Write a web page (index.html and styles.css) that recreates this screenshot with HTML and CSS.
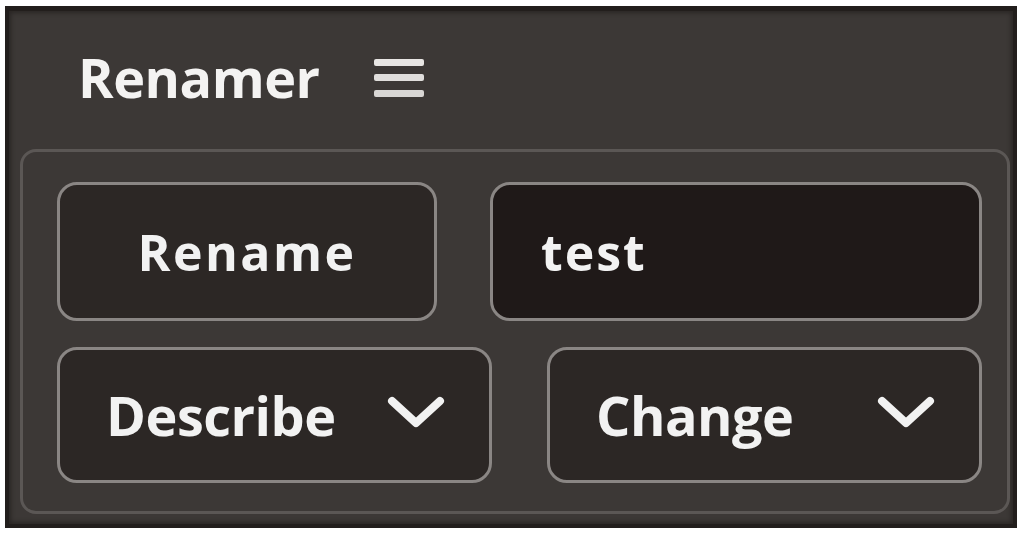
FILE: index.html
```html
<!DOCTYPE html>
<html lang="en">
<head>
    <meta charset="UTF-8">
    <title>Renamer</title>
    <link rel="stylesheet" href="styles.css">
</head>
<body>
    <div class="panel">
        <div class="header">
            <span class="title">Renamer</span>
            <svg class="menu-icon" width="50" height="42" viewBox="0 0 50 42">
                <rect x="0" y="2" width="50" height="7" rx="2" fill="#e8e6e4"/>
                <rect x="0" y="17" width="50" height="7" rx="2" fill="#e0dedc"/>
                <rect x="0" y="33" width="50" height="7" rx="2" fill="#d8d6d4"/>
            </svg>
        </div>

        <div class="group">
            <div class="row row-top">
                <button class="btn rename-btn">Rename</button>
                <div class="text-input">test</div>
            </div>
            <div class="row row-bottom">
                <div class="select">
                    <span>Describe</span>
                    <svg class="chevron" width="58" height="34" viewBox="0 0 58 34">
                        <polyline points="5,6 29,28 53,6" fill="none" stroke="#f2f2f2" stroke-width="8" stroke-linecap="round" stroke-linejoin="round"/>
                    </svg>
                </div>
                <div class="select">
                    <span>Change</span>
                    <svg class="chevron" width="58" height="34" viewBox="0 0 58 34">
                        <polyline points="5,6 29,28 53,6" fill="none" stroke="#f2f2f2" stroke-width="8" stroke-linecap="round" stroke-linejoin="round"/>
                    </svg>
                </div>
            </div>
        </div>
    </div>
</body>
</html>
```

FILE: styles.css
```css
body {
    margin: 0;
    background-color: #ffffff;
    font-family: 'Open Sans', 'Liberation Sans', sans-serif;
}
.panel {
    width: 1012px;
    height: 522px;
    margin: 6px 0 0 5px;
    box-sizing: border-box;
    background-color: #3c3836;
    border: 4px solid #221e1c;
    border-top-width: 5px;
    box-shadow: inset 0 0 4px 2px #2a2624;
    padding: 0 3px 0 11px;
}
.header {
    height: 138px;
    display: flex;
    align-items: center;
    padding-left: 58px;
    gap: 54px;
}
.title {
    color: #f4f3f2;
    font-size: 54px;
    font-weight: 700;
    letter-spacing: -0.5px;
    line-height: 1;
    margin-top: -6px;
}
.menu-icon {
    margin-top: -4px;
}
.group {
    width: 990px;
    height: 365px;
    box-sizing: border-box;
    border: 3px solid #5b5755;
    border-radius: 16px;
    padding: 30px 25px 0 34px;
    display: flex;
    flex-direction: column;
    gap: 26px;
}
.row {
    display: flex;
}
.row-top {
    height: 139px;
    gap: 53px;
}
.row-bottom {
    height: 136px;
    gap: 55px;
}
.btn,
.text-input,
.select {
    box-sizing: border-box;
    border: 3px solid #8a8684;
    border-radius: 20px;
    background-color: #2c2725;
    color: #f2f2f2;
    font-family: 'Open Sans', 'Liberation Sans', sans-serif;
    font-weight: 700;
}
.rename-btn {
    width: 380px;
    font-size: 50px;
    letter-spacing: 2.5px;
    padding: 0;
}
.text-input {
    width: 492px;
    background-color: #1f1918;
    font-size: 50px;
    letter-spacing: 2px;
    display: flex;
    align-items: center;
    padding-left: 48px;
}
.select {
    width: 435px;
    display: flex;
    align-items: center;
    justify-content: space-between;
    padding: 0 44px 0 46px;
    font-size: 54px;
    letter-spacing: -0.5px;
}
.chevron {
    margin-top: -6px;
}
```
